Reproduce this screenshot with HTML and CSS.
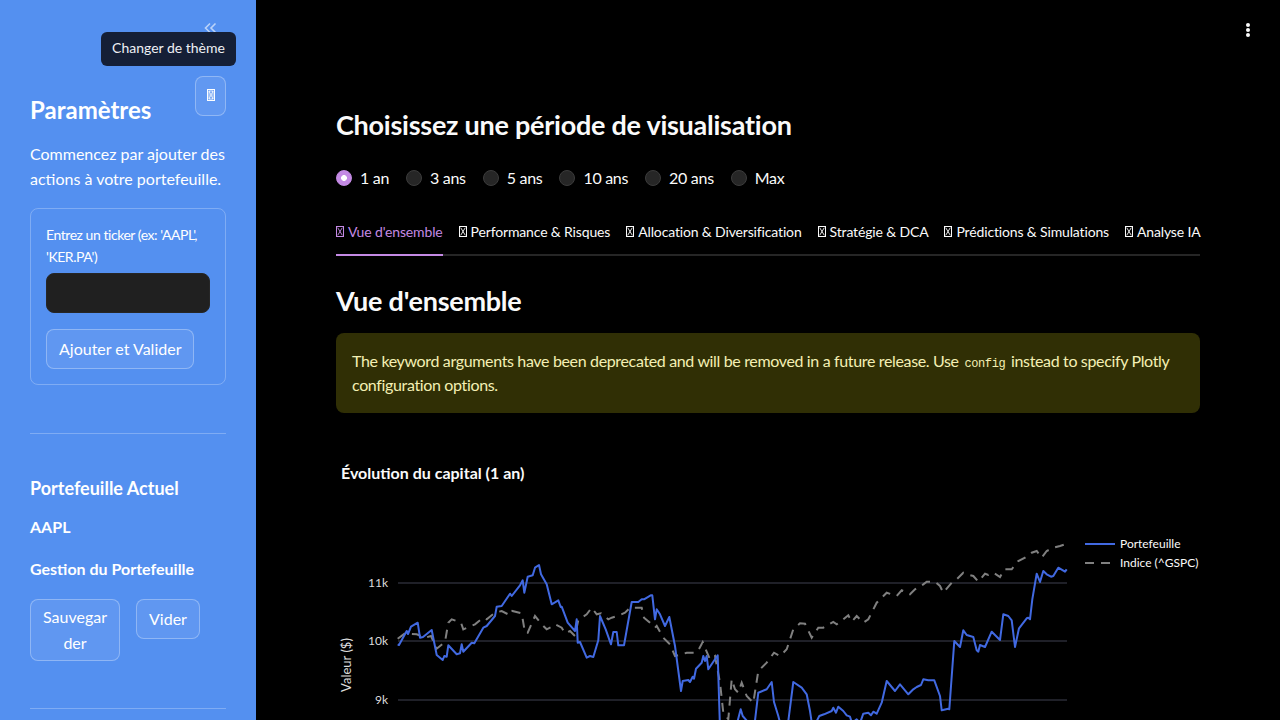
FILE: index.html
```html
<!DOCTYPE html>
<html lang="fr">
<head>
<meta charset="utf-8">
<title>Portefeuille</title>
<link rel="stylesheet" href="styles.css">
</head>
<body>
<div class="app">
  <aside class="sidebar">
    <div class="sb-header">
      <button class="collapse-btn" aria-label="Réduire">
        <svg width="14" height="12" viewBox="0 0 14 12"><path d="M7 1.5L2.5 6L7 10.5M12.5 1.5L8 6L12.5 10.5" fill="none" stroke="currentColor" stroke-width="1.6"/></svg>
      </button>
      <div class="tooltip">Changer de thème</div>
    </div>
    <div class="sb-content">
      <div class="title-row">
        <h2 class="sb-title">Paramètres</h2>
        <button class="icon-btn" aria-label="Thème">
          <svg class="tofu" width="8" height="12" viewBox="0 0 8 12"><rect x="0.5" y="0.5" width="7" height="11" fill="none" stroke="currentColor"/><rect x="2" y="2" width="4" height="8" fill="none" stroke="currentColor" stroke-width="0.8"/><path d="M2 2L6 10M6 2L2 10" stroke="currentColor" stroke-width="0.8"/></svg>
        </button>
      </div>
      <p class="sb-text">Commencez par ajouter des actions à votre portefeuille.</p>
      <form class="ticker-form">
        <label class="field-label" for="ticker">Entrez un ticker (ex: 'AAPL', 'KER.PA')</label>
        <input class="text-input" id="ticker" type="text">
        <button class="btn" type="button">Ajouter et Valider</button>
      </form>
      <hr class="sb-rule">
      <h3 class="sb-subtitle">Portefeuille Actuel</h3>
      <p class="sb-strong first">AAPL</p>
      <p class="sb-strong">Gestion du Portefeuille</p>
      <div class="btn-cols">
        <div class="btn-col"><button class="btn wrap" type="button">Sauvegarder</button></div>
        <div class="btn-col"><button class="btn" type="button">Vider</button></div>
      </div>
      <hr class="sb-rule last">
    </div>
  </aside>

  <main class="main">
    <header class="main-header">
      <button class="kebab" aria-label="Menu"><span></span><span></span><span></span></button>
    </header>
    <div class="content">
      <h3 class="section-title">Choisissez une période de visualisation</h3>
      <div class="radio-group">
        <label class="radio"><span class="radio-dot on"></span>1 an</label>
        <label class="radio"><span class="radio-dot"></span>3 ans</label>
        <label class="radio"><span class="radio-dot"></span>5 ans</label>
        <label class="radio"><span class="radio-dot"></span>10 ans</label>
        <label class="radio"><span class="radio-dot"></span>20 ans</label>
        <label class="radio"><span class="radio-dot"></span>Max</label>
      </div>
      <nav class="tabs">
        <span class="tab active"><svg class="tofu" width="8" height="11" viewBox="0 0 8 11"><rect x="0.5" y="0.5" width="7" height="10" fill="none" stroke="currentColor"/><path d="M1.7 1.7L6.3 9.3M6.3 1.7L1.7 9.3" stroke="currentColor" stroke-width="0.9"/></svg>Vue d'ensemble</span>
        <span class="tab"><svg class="tofu" width="8" height="11" viewBox="0 0 8 11"><rect x="0.5" y="0.5" width="7" height="10" fill="none" stroke="currentColor"/><path d="M1.7 1.7L6.3 9.3M6.3 1.7L1.7 9.3" stroke="currentColor" stroke-width="0.9"/></svg>Performance &amp; Risques</span>
        <span class="tab"><svg class="tofu" width="8" height="11" viewBox="0 0 8 11"><rect x="0.5" y="0.5" width="7" height="10" fill="none" stroke="currentColor"/><path d="M1.7 1.7L6.3 9.3M6.3 1.7L1.7 9.3" stroke="currentColor" stroke-width="0.9"/></svg>Allocation &amp; Diversification</span>
        <span class="tab"><svg class="tofu" width="8" height="11" viewBox="0 0 8 11"><rect x="0.5" y="0.5" width="7" height="10" fill="none" stroke="currentColor"/><path d="M1.7 1.7L6.3 9.3M6.3 1.7L1.7 9.3" stroke="currentColor" stroke-width="0.9"/></svg>Stratégie &amp; DCA</span>
        <span class="tab"><svg class="tofu" width="8" height="11" viewBox="0 0 8 11"><rect x="0.5" y="0.5" width="7" height="10" fill="none" stroke="currentColor"/><path d="M1.7 1.7L6.3 9.3M6.3 1.7L1.7 9.3" stroke="currentColor" stroke-width="0.9"/></svg>Prédictions &amp; Simulations</span>
        <span class="tab"><svg class="tofu" width="8" height="11" viewBox="0 0 8 11"><rect x="0.5" y="0.5" width="7" height="10" fill="none" stroke="currentColor"/><path d="M1.7 1.7L6.3 9.3M6.3 1.7L1.7 9.3" stroke="currentColor" stroke-width="0.9"/></svg>Analyse IA</span>
      </nav>
      <h2 class="page-title">Vue d'ensemble</h2>
      <div class="alert">The keyword arguments have been deprecated and will be removed in a future release. Use <code>config</code> instead to specify Plotly configuration options.</div>
      <svg class="chart" width="864" height="300" viewBox="0 0 864 300">
        <text class="chart-title" x="5" y="50">Évolution du capital (1 an)</text>
        <g class="grid">
          <line x1="62" x2="731" y1="154" y2="154"/>
          <line x1="62" x2="731" y1="212" y2="212"/>
          <line x1="62" x2="731" y1="271" y2="271"/>
        </g>
        <g class="ticks">
          <text x="52" y="158">11k</text>
          <text x="52" y="216">10k</text>
          <text x="52" y="275">9k</text>
        </g>
        <text class="axis-title" transform="translate(15,236) rotate(-90)">Valeur ($)</text>
        <polyline class="line-index" points="61.7,209.7 69,204.3 80.7,205.3 89,208.7 95,207 100.7,219.7 109,213 112.3,193.7 115.7,190.3 125,193.7 127.3,200.3 139,195.3 147.3,188.7 150.7,190.3 159,183.7 165.7,182 174,186.3 176.3,182 185.7,184.3 189,203.7 191.7,203.7 199,187 205.7,195.3 210.7,200.3 217.3,197 219,195.3 225.7,198.7 229,204.3 234,202 239,207 242.3,191 250.7,185.3 255.7,178.7 260.7,185.3 265,184.3 272.3,190.3 275.7,188.7 281.7,187 289,183.7 294,178.7 305.7,178.7 308,188.7 314,193.7 319,198.7 320.7,197 327.3,208.7 334,215.3 339,227 345.7,225.3 350.7,223.7 359,223.7 362.3,221.3 366.7,213 369,218.7 374,230.3 379,227 384,253.7 387.3,283.7 392.3,290.3 395.7,250.3 399,260.3 402.3,263.7 405.7,253.7 410.7,267 417.3,273.7 422.3,242 430.7,233.7 438,223.7 444,227 450.7,220.3 457.3,200.3 464,194.3 469,194.7 475.7,208.7 482.3,198.7 487.3,198.7 497.3,193 500.7,195.3 507.3,190.3 512.3,186.3 515.7,192.7 520.7,187 527.3,193.7 532.3,190.3 540.7,173.7 550.7,163.7 560.7,167 565.7,161.3 574,165.3 579,160.3 587.3,155.3 590.7,152.7 599,152.7 604,157 607.3,163.7 615.7,153.7 620.7,150.3 627.3,143.7 630.7,145.3 637.3,147 642.3,152.7 649,144.7 652.3,146 657.3,143.7 664,148 668.3,140.3 675.7,140.3 682.3,132 689,128.7 695.7,123.7 700.7,122 705.7,128.7 710.7,122 717.3,118.7 724,117 730.7,114.7"/>
        <polyline class="line-pf" points="61.7,215.3 63,216 70.7,202 72,205 75,197.7 81.7,193.7 84,208.7 87,208 95.7,201 100.7,226 106.7,231 108.3,227 110.7,227.7 112.3,216.3 120.7,225.3 124,224.3 125.7,215.3 127.3,222.7 135.7,213.7 138.3,214.3 147.3,198.7 150.7,197 159,187 160.7,177.7 165.7,177 174,164.7 175.7,167 184,156.3 186.7,151.3 188.3,163.7 191.7,147.7 196.7,146.3 199,138.7 203,136 205,145.3 210.7,155.3 215.7,175.3 222.3,171.3 224.7,178 225.7,177.7 231.7,193.7 239,202 240.7,190.3 241.7,213.7 244,213 250.7,228.7 254,227 257.3,228 262.3,211.3 264,187 269.7,200.3 275,215.3 277.3,203 280.7,203 282.3,216.3 288,216.3 295.7,173 302.3,173 305.7,170.3 308,170.3 314.7,166.3 316.3,166.3 319,190.3 320.7,180.3 324,185.3 329,197 333.3,188 339,217 345,262 346.7,252 352.3,251 354,253 356.7,247.7 358,249.7 360,239.7 365.7,233.7 367.3,227 369,232 370.7,227 372.3,240.3 381.7,226.3 384,300 399,302 404.7,280.3 406.7,287 418,300 422.3,263.7 430.7,260.3 435.7,253 438,273 442.3,287 445.7,300 451.3,300 457.3,253 465.7,258.7 470.7,265.3 474,282 476.7,300 483.3,287 488,285.3 495.7,282 497.3,278.7 500,283.7 502.3,277.7 507.3,282 510.7,286.3 514,287.7 516,294 520.7,290.3 524,294 527.3,284.7 532.3,283.7 535,286.3 537.3,282.7 540.7,284.7 545.7,273.7 550.7,252 559,262 564,255.3 572.3,265.3 577.3,260.3 580.7,258 585,256 587.3,250.3 592.3,251.3 598.3,251.3 604,267 605.7,281.3 612.3,279.7 613.3,280.3 618.3,212 624,218 627.3,201.3 630.7,206 637.3,208 640.7,221.3 642.3,222.7 644,216 649,218 655.7,202.7 664,211 667.3,185.3 672.3,187 675.7,191.3 679,218 683,199.3 690.7,189.3 692.3,188.7 694,190.3 696.3,170.3 700.7,144.7 704,153 707.3,142 710.7,145.3 715,147.7 717.3,147 722.3,138.7 729,142.7 730.7,140.3"/>
        <g class="legend">
          <line class="leg-pf" x1="749" x2="779" y1="115" y2="115"/>
          <text x="784" y="119">Portefeuille</text>
          <line class="leg-index" x1="749" x2="779" y1="134" y2="134"/>
          <text x="784" y="138">Indice (^GSPC)</text>
        </g>
      </svg>
    </div>
  </main>
</div>
</body>
</html>
```

FILE: styles.css
```css
* { box-sizing: border-box; }

html, body {
  margin: 0;
  padding: 0;
  height: 100%;
}

body {
  font-family: Lato, "Noto Sans", sans-serif;
  background: #000;
  color: #fafafa;
  overflow: hidden;
}

button {
  font-family: inherit;
  cursor: pointer;
}

.app {
  display: flex;
  height: 100vh;
}

/* ---------- Sidebar ---------- */
.sidebar {
  width: 256px;
  flex: none;
  background: #5490f0;
  color: #fff;
  position: relative;
  overflow: hidden;
}

.sb-header {
  height: 76px;
  display: flex;
  justify-content: flex-end;
  align-items: flex-start;
  padding: 22px 39px 0 0;
}

.collapse-btn {
  border: 0;
  background: none;
  padding: 0;
  width: 14px;
  height: 12px;
  color: rgba(255, 255, 255, 0.6);
  display: flex;
}

.tooltip {
  position: absolute;
  top: 32px;
  left: 101px;
  width: 135px;
  height: 34px;
  background: #151f36;
  border-radius: 6px;
  color: #eef0f4;
  font-size: 14px;
  line-height: 20px;
  padding-bottom: 3px;
  display: flex;
  align-items: center;
  justify-content: center;
}

.sb-content {
  padding: 0 30px;
}

.title-row {
  display: flex;
  justify-content: space-between;
  align-items: flex-start;
}

.sb-title {
  margin: 20px 0 0;
  font-size: 24px;
  font-weight: 700;
  line-height: 1.2;
}

.icon-btn {
  width: 31px;
  height: 40px;
  border: 1px solid rgba(255, 255, 255, 0.3);
  background: rgba(255, 255, 255, 0.08);
  border-radius: 8px;
  color: #fff;
  display: flex;
  align-items: center;
  justify-content: center;
  padding: 0 0 2px;
}

.sb-text {
  margin: 16px 0;
  font-size: 16px;
  line-height: 1.6;
}

.ticker-form {
  border: 1px solid rgba(255, 255, 255, 0.25);
  border-radius: 8px;
  padding: 15px;
}

.field-label {
  display: block;
  font-size: 14px;
  line-height: 1.6;
  letter-spacing: -0.45px;
  margin-bottom: 4px;
}

.text-input {
  display: block;
  width: 100%;
  height: 40px;
  background: #202020;
  border: 1px solid #262626;
  border-radius: 8px;
}

.btn {
  font-size: 16px;
  line-height: 1.6;
  color: #fff;
  background: rgba(255, 255, 255, 0.07);
  border: 1px solid rgba(255, 255, 255, 0.3);
  border-radius: 8px;
  padding: 6px 12px;
  min-height: 40px;
}

.ticker-form .btn {
  margin-top: 16px;
}

.sb-rule {
  border: 0;
  border-top: 1px solid rgba(255, 255, 255, 0.25);
  margin: 48px 0 42px;
}

.sb-rule.last {
  margin-top: 47px;
}

.sb-subtitle {
  margin: 0;
  font-size: 18px;
  font-weight: 700;
  line-height: 24px;
}

.sb-strong {
  margin: 16px 0 0;
  font-size: 16px;
  font-weight: 700;
  line-height: 1.6;
}

.sb-strong.first {
  margin-top: 14px;
}

.sb-strong + .sb-strong {
  margin-top: 17px;
}

.btn-cols {
  display: flex;
  gap: 16px;
  margin-top: 17px;
  align-items: flex-start;
}

.btn-col {
  width: 90px;
}

.btn.wrap {
  width: 100%;
  padding: 4px 10px 5px;
  overflow-wrap: anywhere;
}

/* ---------- Main ---------- */
.main {
  flex: 1;
  background: #000;
  overflow: hidden;
}

.main-header {
  height: 60px;
  display: flex;
  justify-content: flex-end;
  align-items: center;
  padding-right: 30px;
}

.kebab {
  border: 0;
  background: none;
  padding: 0;
  display: flex;
  flex-direction: column;
  gap: 1.2px;
}

.kebab span {
  width: 4px;
  height: 4px;
  border-radius: 50%;
  background: #fafafa;
}

.content {
  padding: 48px 80px 0;
}

.section-title {
  margin: 0;
  font-size: 27px;
  font-weight: 700;
  line-height: 33.6px;
  letter-spacing: -0.25px;
}

.radio-group {
  display: flex;
  gap: 17px;
  margin-top: 24px;
  height: 24px;
  align-items: center;
}

.radio {
  display: flex;
  align-items: center;
  gap: 8px;
  font-size: 16px;
  line-height: 24px;
  letter-spacing: -0.3px;
}

.radio-dot {
  width: 16px;
  height: 16px;
  border-radius: 50%;
  background: #262626;
  border: 1px solid #3c3c3c;
}

.radio-dot.on {
  background: radial-gradient(circle, #fff 0 2.6px, #c48ae4 3.2px);
  border-color: #c48ae4;
}

.tabs {
  display: flex;
  gap: 16px;
  margin-top: 26px;
  border-bottom: 2px solid #262626;
}

.tab {
  font-size: 14px;
  line-height: 20px;
  letter-spacing: -0.15px;
  padding: 6px 0 12px;
  margin-bottom: -2px;
  border-bottom: 2px solid transparent;
  display: flex;
  align-items: center;
  gap: 4px;
  white-space: nowrap;
}

.tab.active {
  color: #c48ae4;
  border-bottom-color: #c48ae4;
}

.tofu {
  flex: none;
  display: block;
}

.page-title {
  margin: 28px 0 0;
  font-size: 27px;
  font-weight: 700;
  line-height: 33.6px;
  letter-spacing: -0.25px;
}

.alert {
  margin-top: 16px;
  background: #302f05;
  color: #f4f0b4;
  border-radius: 8px;
  padding: 16px;
  font-size: 16px;
  line-height: 24px;
  letter-spacing: -0.35px;
}

.alert code {
  font-family: "Liberation Mono", "DejaVu Sans Mono", monospace;
  font-size: 12px;
  line-height: 1;
  letter-spacing: -0.4px;
  margin: 0 2px;
}

.chart {
  display: block;
  margin-top: 16px;
  font-family: Lato, "Noto Sans", sans-serif;
}

.chart-title {
  fill: #fafafa;
  font-size: 16px;
  font-weight: 700;
}

.grid line {
  stroke: #3f4150;
  stroke-width: 1;
}

.ticks text {
  fill: #dcdcdc;
  font-size: 12px;
  text-anchor: end;
}

.axis-title {
  fill: #dcdcdc;
  font-size: 13px;
  text-anchor: middle;
}

.line-pf,
.leg-pf {
  fill: none;
  stroke: #4169e1;
  stroke-width: 2;
  stroke-linejoin: round;
}

.line-index,
.leg-index {
  fill: none;
  stroke: #808080;
  stroke-width: 2;
  stroke-dasharray: 9 7;
}

.legend text {
  fill: #fafafa;
  font-size: 12px;
}
```
